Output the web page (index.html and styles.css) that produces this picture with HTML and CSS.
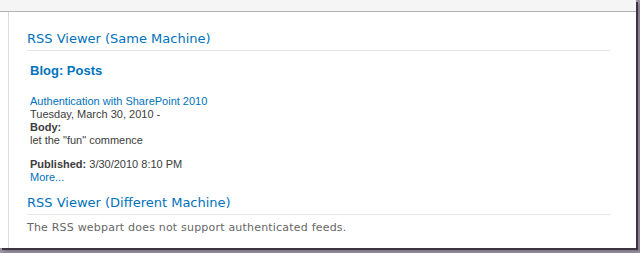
FILE: index.html
```html
<!DOCTYPE html>
<html>

<head>
    <title>RSS Viewer</title>
    <meta name="viewport" content="width=device-width, initial-scale=1.0">
    <link rel="stylesheet" href="styles.css">
</head>

<body>
    <div class="window">
        <div class="topbar"></div>
        <div class="main">
            <div class="webpart">
                <h2 class="part-title">RSS Viewer (Same Machine)</h2>
                <div class="feed">
                    <h3 class="feed-title">Blog: Posts</h3>
                    <div class="item">
                        <a href="#" class="item-link">Authentication with SharePoint 2010</a><br>
                        Tuesday, March 30, 2010 -<br>
                        <b>Body:</b><br>
                        let the "fun" commence
                    </div>
                    <div class="item">
                        <b>Published:</b> 3/30/2010 8:10 PM<br>
                        <a href="#" class="item-link">More...</a>
                    </div>
                </div>
            </div>
            <div class="webpart">
                <h2 class="part-title">RSS Viewer (Different Machine)</h2>
                <p class="notice">The RSS webpart does not support authenticated feeds.</p>
            </div>
        </div>
    </div>
</body>

</html>
```

FILE: styles.css
```css
body {
    margin: 0;
    background-color: #9a92a0;
    width: 640px;
    height: 253px;
    overflow: hidden;
}

.window {
    width: 636px;
    height: 248px;
    background-color: #fff;
    box-shadow: 2px 2px 0 #3c3540, 4px 4px 2px #847a8c;
    display: flex;
    flex-direction: column;
}

.topbar {
    height: 11px;
    background-color: #f6f5f6;
    border-bottom: 1px solid #b3b3b3;
}

.main {
    flex: 1;
    margin-left: 8px;
    border-left: 1px solid #dcdcdc;
    padding: 19px 26px 0 18px;
}

.part-title {
    font-family: "DejaVu Sans", Verdana, sans-serif;
    font-size: 13px;
    font-weight: normal;
    line-height: 16px;
    color: #0072bc;
    margin: 0;
    padding-bottom: 3px;
    border-bottom: 1px solid #e6e6e6;
}

.webpart + .webpart .part-title {
    margin-top: 11px;
}

.feed {
    padding-left: 3px;
    font-family: "Liberation Sans", Arial, sans-serif;
    font-size: 11px;
    line-height: 13px;
    color: #3c3c3c;
}

.feed-title {
    font-family: "Liberation Sans", Arial, sans-serif;
    font-size: 13px;
    font-weight: bold;
    line-height: 16px;
    color: #0072bc;
    margin: 12px 0 16px;
}

.item {
    margin-bottom: 11px;
}

.item:last-child {
    margin-bottom: 0;
}

.item-link {
    color: #0072bc;
    text-decoration: none;
}

.notice {
    font-family: "DejaVu Sans", Verdana, sans-serif;
    font-size: 11px;
    letter-spacing: 0.2px;
    line-height: 14px;
    color: #666;
    margin: 6px 0 0;
}
```
